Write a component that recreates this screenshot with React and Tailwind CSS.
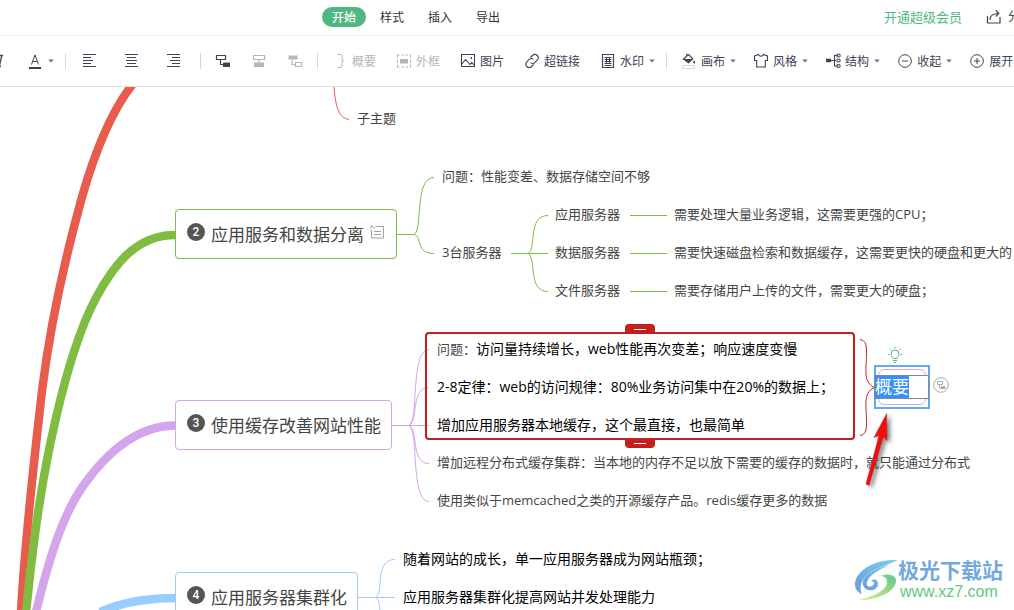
import { useEffect, useRef } from "react";

function Icon({ children, className = "" }) {
  return (
    <svg
      className={`size-4 shrink-0 ${className}`}
      viewBox="0 0 16 16"
      fill="none"
      stroke="currentColor"
      strokeWidth="1"
      aria-hidden
    >
      {children}
    </svg>
  );
}

function Caret() {
  return (
    <svg className="h-1 w-2 shrink-0 text-[#6b7280]" viewBox="0 0 8 4" fill="currentColor" aria-hidden>
      <path d="M1.2 0.4h5.6L4 3.4z" />
    </svg>
  );
}

function Divider() {
  return <span className="h-4 w-px shrink-0 bg-[#d5d7db]" />;
}

const ICONS = {
  italic: <path d="M11 2.500h5M9 13.500h5M14.800 2.500l-2.500 11" strokeWidth="1.300" />,
  fontColor: (
    <>
      <path d="M4.500 11.500L8 2l3.500 9.500M5.600 8.500h4.800" />
      <path d="M2 15h12" stroke="#3a3f4a" strokeWidth="2" />
    </>
  ),
  alignLeft: <path d="M1 1.500h13M1 4.500h8M1 7.500h10M1 10.500h8M1 13.500h13" />,
  alignCenter: <path d="M1 1.500h13M3 4.500h9M2 7.500h11M3 10.500h9M1 13.500h13" />,
  alignRight: <path d="M1 1.500h13M6 4.500h8M4 7.500h10M6 10.500h8M1 13.500h13" />,
  child: (
    <>
      <path d="M1.500 2.500h9v4h-9zM5.500 6.500v5h3" strokeWidth="1.200" />
      <path d="M8 9.500h7V14H8z" fill="currentColor" stroke="none" />
    </>
  ),
  sibling: (
    <>
      <path d="M2.500 2.500h11v4h-11zM8 6.500V10" strokeWidth="1.200" />
      <path d="M3 9.500h10V14H3z" fill="currentColor" stroke="none" />
    </>
  ),
  parent: (
    <>
      <path d="M1.500 2.500h9v4h-9z" fill="currentColor" stroke="none" />
      <path d="M5 6.500v5h3M8.500 9.500h6v4h-6z" strokeWidth="1.200" />
    </>
  ),
  summary: <path d="M5.500 1.500h3q1.500 0 1.500 1.500v3q0 1.500 2 1.500q-2 0-2 1.500v4q0 1.500-1.500 1.500h-3" />,
  frame: (
    <>
      <path d="M1.500 1.500v13M14.500 1.500v13" strokeDasharray="3 2" />
      <path d="M1 2h14M1 14h14" strokeDasharray="2.500 1.800" />
      <path d="M4 6h8v4.500H4z" fill="currentColor" stroke="none" />
    </>
  ),
  image: (
    <>
      <path d="M1.500 1.500h13v12h-13zM1.500 11.500l4-5 4.500 5 1.800-2 2.700 3" strokeWidth="1.100" />
      <circle cx="11.200" cy="5" r="0.900" fill="currentColor" stroke="none" />
    </>
  ),
  link: (
    <path
      d="M6.500 4.500l2-2a3.300 3.300 0 0 1 4.700 4.700l-2.400 2.400a3 3 0 0 1-4.300-.1M9.500 11.500l-2 2a3.300 3.300 0 0 1-4.700-4.700l2.400-2.400a3 3 0 0 1 4.300.1"
      strokeWidth="1.100"
    />
  ),
  stamp: (
    <>
      <path d="M2.500 1.500h11v13h-11z" strokeWidth="1.200" />
      <path d="M4.500 4.500h7M4.500 6.500h7M4.500 8.500h7M4.500 10.500h7M6.500 4v7M9.500 4v7M4.500 12.500h7" />
    </>
  ),
  bucket: (
    <>
      <path d="M5 1l1.500 1.500M2 6.500L7.500 1.500 12 6" strokeWidth="1.100" />
      <path d="M1.500 6h11L7.500 10.500z" fill="currentColor" stroke="none" />
      <path d="M13 7q1.800 2.700.6 3.400q-1 .4-1.400-.7q0-1 .8-2.700z" fill="currentColor" stroke="none" />
      <path d="M1.500 12.500h12v3h-12z" stroke="#d5d7db" />
    </>
  ),
  shirt: (
    <path d="M5.500 1.500L1.500 3v4.500h2.200v6.500h8.600V7.500h2.200V3l-4-1.500q-.5 1.700-2.500 1.700t-2.500-1.700z" strokeWidth="1.100" />
  ),
  tree: (
    <>
      <path d="M1 5.700h5v3.500H1z" fill="currentColor" stroke="none" />
      <path d="M6 7.500h5M13 2.500h-3.500v10.500H13" strokeWidth="1.100" />
      <path d="M12 1.200h3v2.600h-3zM12 6.200h3v2.600h-3zM12 11.700h3v2.600h-3z" />
    </>
  ),
  minus: (
    <>
      <circle cx="8" cy="8" r="6.300" />
      <path d="M5 8h6" />
    </>
  ),
  plus: (
    <>
      <circle cx="8" cy="8" r="6.300" />
      <path d="M5 8h6M8 5v6" />
    </>
  ),
};

function Tool({ icon, label, title, caret, disabled }) {
  return (
    <button
      type="button"
      disabled={disabled}
      aria-label={label || title}
      className={`flex shrink-0 items-center gap-1 text-xs leading-4 whitespace-nowrap ${
        disabled ? "text-[#b3b6be]" : "text-[#3b4354]"
      }`}
    >
      <Icon>{ICONS[icon]}</Icon>
      {label && <span className="pt-0.5">{label}</span>}
      {caret && <Caret />}
    </button>
  );
}

const TABS = ["开始", "样式", "插入", "导出"];

function Header() {
  return (
    <header className="flex h-9 items-center overflow-hidden border-b border-[#f0f0f0] pb-0.5">
      <nav className="ml-[322px] flex shrink-0 gap-1">
        {TABS.map((tab, i) => (
          <button
            key={tab}
            type="button"
            className={`h-5 w-11 rounded-full pt-px text-xs leading-5 ${
              i === 0 ? "bg-[#4fb882] font-medium text-white" : "text-[#333]"
            }`}
          >
            {tab}
          </button>
        ))}
      </nav>
      <div className="ml-auto -mr-1.5 flex shrink-0 items-center gap-6">
        <a href="#vip" className="text-[13px] leading-5 text-[#4fb882]">
          开通超级会员
        </a>
        <button type="button" aria-label="分享" className="flex items-center gap-1.5 text-xs leading-5 text-[#444]">
          <Icon>
            <path d="M1.500 7v7h12.500V8" strokeWidth="1.200" />
            <path d="M4 11q0-6.500 8.500-6.500M9.800 1.500l3 3-3 3" strokeWidth="1.200" />
          </Icon>
          分
        </button>
      </div>
    </header>
  );
}

function Toolbar() {
  return (
    <div className="flex h-[51px] items-center overflow-hidden border-b border-[#e1e1e1]">
      <div className="-ml-[13px] flex shrink-0 items-center gap-6 pr-2.5">
        <Tool icon="italic" title="斜体" />
        <Tool icon="fontColor" title="字体颜色" caret />
      </div>
      <Divider />
      <div className="flex shrink-0 items-center gap-[26px] pr-[18px] pl-4">
        <Tool icon="alignLeft" title="左对齐" />
        <Tool icon="alignCenter" title="居中" />
        <Tool icon="alignRight" title="右对齐" />
      </div>
      <Divider />
      <div className="flex shrink-0 items-center gap-5 px-3.5">
        <Tool icon="child" title="子主题" />
        <Tool icon="sibling" title="同级主题" disabled />
        <Tool icon="parent" title="父主题" disabled />
      </div>
      <Divider />
      <div className="flex shrink-0 items-center gap-5 pr-2.5 pl-3.5">
        <Tool icon="summary" label="概要" disabled />
        <Tool icon="frame" label="外框" disabled />
        <Tool icon="image" label="图片" />
        <Tool icon="link" label="超链接" />
        <Tool icon="stamp" label="水印" caret />
      </div>
      <Divider />
      <div className="flex shrink-0 items-center gap-4 pl-3.5">
        <Tool icon="bucket" label="画布" caret />
        <Tool icon="shirt" label="风格" caret />
        <Tool icon="tree" label="结构" caret />
        <Tool icon="minus" label="收起" caret />
        <Tool icon="plus" label="展开" />
      </div>
    </div>
  );
}

// x / y of the middle of each text line, canvas coordinates
const TOPICS = [
  { x: 357, y: 31, text: "子主题" },
  { x: 442, y: 89, text: "问题：性能变差、数据存储空间不够" },
  { x: 442, y: 165, text: "3台服务器" },
  { x: 555, y: 127, text: "应用服务器" },
  { x: 555, y: 165, text: "数据服务器" },
  { x: 555, y: 203, text: "文件服务器" },
  { x: 674, y: 127, text: "需要处理大量业务逻辑，这需要更强的CPU；" },
  { x: 674, y: 165, text: "需要快速磁盘检索和数据缓存，这需要更快的硬盘和更大的" },
  { x: 674, y: 203, text: "需要存储用户上传的文件，需要更大的硬盘；" },
  { x: 437, y: 262, lead: "问题：", text: "访问量持续增长，web性能再次变差；响应速度变慢", strong: true },
  { x: 437, y: 300, text: "2-8定律：web的访问规律：80%业务访问集中在20%的数据上；", strong: true },
  { x: 437, y: 338, text: "增加应用服务器本地缓存，这个最直接，也最简单", strong: true },
  { x: 437, y: 375, text: "增加远程分布式缓存集群：当本地的内存不足以放下需要的缓存的数据时，就只能通过分布式" },
  { x: 437, y: 413, text: "使用类似于memcached之类的开源缓存产品。redis缓存更多的数据" },
  { x: 403, y: 472, text: "随着网站的成长，单一应用服务器成为网站瓶颈；", strong: true },
  { x: 403, y: 510, text: "应用服务器集群化提高网站并发处理能力", strong: true },
];

function Topic({ x, y, lead, text, strong }) {
  return (
    <p
      className={`absolute leading-5 whitespace-nowrap ${strong ? "text-sm text-black" : "text-[13px] text-[#444]"}`}
      style={{ left: x, top: y - 10 }}
    >
      {lead && <span className="text-[13px] text-[#444]">{lead}</span>}
      {text}
    </p>
  );
}

function MainTopic({ n, text, note, className }) {
  return (
    <div
      className={`absolute left-[175px] flex h-[50px] items-center gap-1.5 rounded border bg-white pr-2.5 pl-[11px] whitespace-nowrap ${className}`}
    >
      <span className="mb-1 flex size-[18px] items-center justify-center rounded-full bg-[#555] font-[Roboto] text-xs font-medium text-white">
        {n}
      </span>
      <span className="pt-0.5 text-[17px] leading-6 text-[#444]">{text}</span>
      {note && (
        <Icon className="mb-1 text-[#a3a3a3]">
          <path d="M5.500 2.500h8v11.500h-12V6M4 7.500h7M4 10.500h7M1 1.500l4 3M1 1.500v3.500" />
        </Icon>
      )}
    </div>
  );
}

function Links() {
  return (
    <svg
      className="absolute top-0 left-0 h-[523px] w-[1014px]"
      viewBox="0 87 1014 523"
      fill="none"
      aria-hidden
    >
      <g strokeWidth="8.500">
        <path d="M100 612C125 601 150 598 175 598" stroke="#99ccff" />
        <path d="M36 612C48 562 62 516 83 486C105 455 135 425.500 175 425.500" stroke="#d4a5eb" />
        <path d="M136 80C114 106 96 148 82 197C64 262 49 334 42 391C34 460 25 540 21 612" stroke="#e85c4e" />
        <path d="M26 612C32 555 38 503 50 445C60 397 75 336 97 296C113 267 135 235 175 235" stroke="#80bc42" />
      </g>
      <path d="M333.500 80C335 108 339 118 349 119.500" stroke="#e85c4e" />
      <g stroke="#80bc42">
        <path d="M397 234.500H414C423 231 414 177.500 434 177.500M414 234.500C423 237 415 253.500 434 253.500" />
        <path d="M511 253.500H548M528 253.500C537 249 527 215.500 548 215.500M528 253.500C537 258 527 291.500 548 291.500" />
        <path d="M630 215.500H667M630 253.500H667M630 291.500H667" />
      </g>
      <g stroke="#d4a5eb">
        <path d="M392 425.500H429" />
        <path d="M409 425.500C419 421 410 349.500 429 349.500M409 425.500C419 421 410 387.500 429 387.500" />
        <path d="M409 425.500C419 430 410 463.500 429 463.500M409 425.500C419 430 410 501.500 429 501.500" />
      </g>
      <g stroke="#99ccff">
        <path d="M358 597.500H395M376 597.500C384 593 374 559.500 395 559.500M376 597.500C384 602 374 635.500 395 635.500" />
      </g>
      <path
        d="M860 339.500Q866.500 340 866.500 350C867 368 862 381 874 387.500C862 394 867 407 866.500 425Q866.500 435 860 435.500"
        stroke="#c1201f"
      />
    </svg>
  );
}

function RangeHandle({ className, label }) {
  return (
    <button
      type="button"
      aria-label={label}
      className={`absolute left-[198px] flex h-2.5 w-[30px] items-center justify-center bg-[#c1201f] ${className}`}
    >
      <span className="h-px w-3 bg-white" />
    </button>
  );
}

function SummaryEditor() {
  const inputRef = useRef(null);

  useEffect(() => {
    inputRef.current?.focus();
    inputRef.current?.select();
  }, []);

  return (
    <div className="absolute top-[278px] left-[874px] flex h-11 w-14 items-center border-2 border-[#61a8f5] bg-white">
      <span className="absolute inset-0.5 rounded-md border border-[#d4a5eb]" />
      <input
        ref={inputRef}
        aria-label="概要"
        defaultValue="概要"
        className="relative -ml-0.5 h-6 w-[55px] shrink-0 border border-[#888] bg-white text-[17px] leading-6 caret-transparent outline-none selection:bg-[#3390ff]/99 selection:text-white"
      />
    </div>
  );
}

function PointerArrow() {
  return (
    <svg
      className="absolute top-[323px] left-[862px] h-20 w-8 drop-shadow-[3px_2px_2px_rgba(0,0,0,0.5)]"
      viewBox="862 410 32 80"
      aria-hidden
    >
      <path d="M886.700 413.500L874 437.500L879 435.500L866 484L869 485.500L883.500 436.500L887 440.500z" fill="#f30c0c" stroke="#a33" strokeWidth="0.500" />
    </svg>
  );
}

function Watermark() {
  return (
    <div className="absolute top-[471px] left-[854px] flex items-center">
      <svg className="h-11 w-11 shrink-0" viewBox="0 0 44 44" aria-hidden>
        <defs>
          <linearGradient id="wm-blue" x1="0" y1="1" x2="1" y2="0">
            <stop offset="0" stopColor="#6a9bd6" />
            <stop offset="1" stopColor="#7ccdf0" />
          </linearGradient>
          <linearGradient id="wm-green" x1="0" y1="1" x2="1" y2="0">
            <stop offset="0" stopColor="#f2ee8a" />
            <stop offset="0.8" stopColor="#74cf8e" />
          </linearGradient>
        </defs>
        <path d="M44 2C26 1 8 8 2 21C-1 29 3 34 8 36C4 28 8 16 25 10C30 8 37 5 44 2z" fill="url(#wm-blue)" />
        <path d="M35 7C18 11 7 19 9 27C11 34 22 34 24 27C25 22 20 20 17 23C20 23 21 26 18 28C14 30 12 27 13 24C15 17 25 12 35 7z" fill="url(#wm-blue)" />
        <path d="M26 18C36 14 43 18 42 24C40 34 23 43 4 42C18 39 32 33 33 25C33 20 31 18 26 18z" fill="url(#wm-green)" />
      </svg>
      <div className="whitespace-nowrap">
        <div className="text-[21px] leading-6 font-bold text-[#74a8dc]">极光下载站</div>
        <div className="pl-0.5 font-['Liberation_Sans'] text-base leading-5 text-[#5fc97e]">www.xz7.com</div>
      </div>
    </div>
  );
}

function Canvas() {
  return (
    <main className="relative flex-1 overflow-hidden">
      <Links />

      <MainTopic n={2} text="应用服务和数据分离" note className="top-[122px] border-[#80bc42]" />
      <MainTopic n={3} text="使用缓存改善网站性能" className="top-[313px] border-[#d4a5eb]" />
      <MainTopic n={4} text="应用服务器集群化" className="top-[485px] border-[#99ccff]" />

      {TOPICS.map((t) => (
        <Topic key={t.text} {...t} />
      ))}

      <div className="absolute top-[245px] left-[425px] h-[108px] w-[430px] rounded border-2 border-[#c1201f]">
        <RangeHandle label="上边界" className="-top-2.5 rounded-t" />
        <RangeHandle label="下边界" className="-bottom-2.5 rounded-b" />
      </div>

      <Icon className="absolute top-[260px] left-[887px] text-[#4fb882]">
        <path d="M6 11.500c0-1.500-2-2-2-4.500a4 4 0 0 1 8 0c0 2.500-2 3-2 4.500zM6 13.500h4M7 15.500h2" />
        <path d="M8 0v1.500M2.300 2l1.200 1.200M13.700 2l-1.200 1.200M.8 7.500h1.500M13.700 7.500h1.500" />
      </Icon>
      <SummaryEditor />
      <Icon className="absolute top-[290px] left-[933px] text-[#aaa]">
        <circle cx="8" cy="8" r="7.300" />
        <path d="M4.500 4.500h5v3h-5zM6.500 7.500V11H8" />
        <path d="M8 9.200h4.500v2.800H8z" fill="currentColor" stroke="none" />
      </Icon>
      <PointerArrow />
      <Watermark />
    </main>
  );
}

export default function App() {
  return (
    <div className="flex min-h-screen flex-col overflow-hidden bg-white font-['Open_Sans','Noto_Sans_CJK_SC',sans-serif]">
      <Header />
      <Toolbar />
      <Canvas />
    </div>
  );
}
